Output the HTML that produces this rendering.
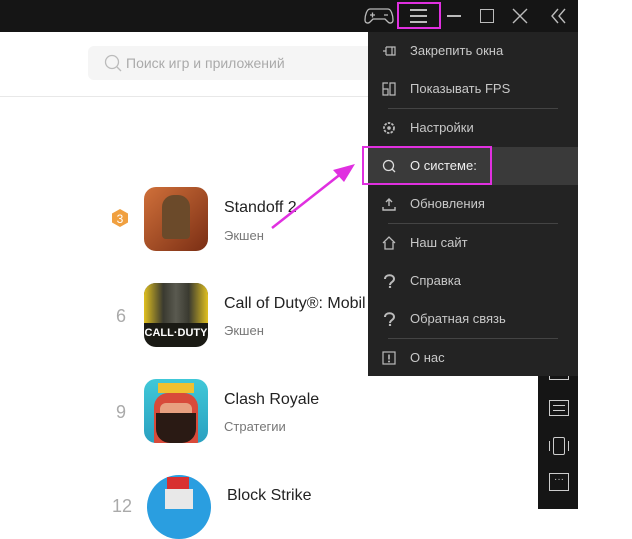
<!DOCTYPE html><html><head><meta charset="utf-8"><style>
*{margin:0;padding:0;box-sizing:border-box}
body{width:632px;height:509px;overflow:hidden;background:#fff;font-family:"Liberation Sans",sans-serif;position:relative}
.a{position:absolute}
.top{left:0;top:0;width:578px;height:32px;background:#151515}
.side{left:538px;top:32px;width:40px;height:477px;background:#151515}
.menu{left:368px;top:32px;width:210px;height:344px;background:#232323}
.mi{position:absolute;left:0;width:210px;height:38px;color:#c8c8c8;font-size:13px;line-height:38px;padding-left:42px}
.mi svg{position:absolute;left:14px;top:12px}
.sep{position:absolute;left:20px;width:170px;height:1px;background:#444}
.t{font-size:16px;color:#222}.s{font-size:13px;color:#777}
.icon{width:64px;height:64px;border-radius:12px;position:absolute;left:144px}
.rk{position:absolute;left:112px;font-size:18px;color:#aaa;width:18px;text-align:center}
</style></head><body>
<div class="a top"></div>
<svg class="a" style="left:364px;top:6px" width="30" height="20" viewBox="0 0 30 20"><path d="M6 3h18c3 0 5 6 5 11c0 3-3 4-5 2l-3-3H9l-3 3c-2 2-5 1-5-2C1 9 3 3 6 3z" fill="none" stroke="#bbb" stroke-width="1.3"/><path d="M6 9h5M8.5 6.5v5M20 9h4" stroke="#bbb" stroke-width="1.3"/></svg>
<div class="a" style="left:410px;top:9px;width:17px;height:1.5px;background:#bbb"></div>
<div class="a" style="left:410px;top:15px;width:17px;height:1.5px;background:#bbb"></div>
<div class="a" style="left:410px;top:21px;width:17px;height:1.5px;background:#bbb"></div>
<div class="a" style="left:447px;top:15px;width:14px;height:1.5px;background:#bbb"></div>
<div class="a" style="left:480px;top:9px;width:14px;height:14px;border:1.5px solid #bbb"></div>
<svg class="a" style="left:512px;top:8px" width="16" height="16"><path d="M1 1L15 15M15 1L1 15" stroke="#bbb" stroke-width="1.4"/></svg>
<svg class="a" style="left:550px;top:8px" width="18" height="16"><path d="M8 1L2 8l6 7M15 1L9 8l6 7" fill="none" stroke="#bbb" stroke-width="1.4"/></svg>
<div class="a" style="left:88px;top:46px;width:290px;height:34px;background:#f5f5f5;border-radius:6px"></div>
<svg class="a" style="left:104px;top:54px" width="18" height="18"><circle cx="8" cy="8" r="6.5" fill="none" stroke="#bbb" stroke-width="1.3"/><path d="M13 13l4 4" stroke="#bbb" stroke-width="1.3"/></svg>
<div class="a" style="left:126px;top:55px;font-size:14px;color:#aaa">Поиск игр и приложений</div>
<div class="a" style="left:0;top:96px;width:368px;height:1px;background:#e8e8e8"></div>

<svg class="a" style="left:111px;top:208px" width="18" height="20"><path d="M9 1l8 4.5v9L9 19l-8-4.5v-9z" fill="#f0a040"/><text x="9" y="15" font-size="12" fill="#fff" text-anchor="middle" font-family="Liberation Sans">3</text></svg>
<div class="icon" style="top:187px;background:linear-gradient(135deg,#d0703a,#7a2e14)"><div style="position:absolute;left:18px;top:8px;width:28px;height:44px;background:#6b4a2a;border-radius:12px 12px 4px 4px"></div></div>
<div class="a t" style="left:224px;top:199px">Standoff 2</div><div class="a s" style="left:224px;top:228px">Экшен</div>
<div class="rk" style="top:306px">6</div>
<div class="icon" style="top:283px;background:#1a1a14;overflow:hidden"><div style="position:absolute;left:0;top:0;width:64px;height:40px;background:linear-gradient(90deg,#e0c020,#3a3a30 30%,#5a5a50 50%,#3a3a30 70%,#e0c020)"></div><div style="position:absolute;left:0;top:44px;width:64px;text-align:center;color:#fff;font-weight:bold;font-size:11px">CALL·DUTY</div></div>
<div class="a t" style="left:224px;top:295px">Call of Duty®: Mobil</div><div class="a s" style="left:224px;top:323px">Экшен</div>
<div class="rk" style="top:402px">9</div>
<div class="icon" style="top:379px;background:linear-gradient(#40c8d8,#2aa0c0);overflow:hidden"><div style="position:absolute;left:14px;top:4px;width:36px;height:10px;background:#f0c030"></div><div style="position:absolute;left:10px;top:14px;width:44px;height:50px;background:#d84a3a;border-radius:14px 14px 0 0"></div><div style="position:absolute;left:16px;top:24px;width:32px;height:30px;background:#e8a080;border-radius:6px"></div><div style="position:absolute;left:12px;top:34px;width:40px;height:30px;background:#2a1a14;border-radius:0 0 14px 14px"></div></div>
<div class="a t" style="left:224px;top:391px">Clash Royale</div><div class="a s" style="left:224px;top:419px">Стратегии</div>
<div class="rk" style="top:496px;left:110px;width:24px">12</div>
<div class="icon" style="top:475px;left:147px;border-radius:32px;background:#2a9ee0;overflow:hidden"><div style="position:absolute;left:20px;top:2px;width:22px;height:14px;background:#d83030"></div><div style="position:absolute;left:18px;top:14px;width:28px;height:20px;background:#e8e8e8"></div></div>
<div class="a t" style="left:227px;top:487px">Block Strike</div>

<div class="a side"></div>
<div class="a" style="left:549px;top:400px;width:20px;height:16px;border:1.3px solid #ccc"></div>
<div class="a" style="left:553px;top:405px;width:12px;height:1.4px;background:#ccc"></div><div class="a" style="left:553px;top:410px;width:12px;height:1.4px;background:#ccc"></div>
<div class="a" style="left:553px;top:437px;width:12px;height:18px;border:1.5px solid #ccc;border-radius:2px"></div>
<div class="a" style="left:549px;top:441px;width:1.4px;height:10px;background:#ccc"></div><div class="a" style="left:568px;top:441px;width:1.4px;height:10px;background:#ccc"></div>
<div class="a" style="left:549px;top:473px;width:20px;height:18px;border:1.3px solid #ccc;color:#ccc;font-size:10px;text-align:center;line-height:12px">···</div>
<div class="a" style="left:549px;top:370px;width:20px;height:10px;border:1.3px solid #ccc;border-top:none"></div>

<div class="a menu">
<div class="mi" style="top:0"><svg width="14" height="14"><path d="M1 7h3M4 3v8M4 3h9v8H4M10 3v8" fill="none" stroke="#bbb" stroke-width="1.2"/></svg>Закрепить окна</div>
<div class="mi" style="top:38px"><svg width="14" height="14"><path d="M6 1H1v12h5V7H1M8 1h5v12H8z" fill="none" stroke="#bbb" stroke-width="1.2"/></svg>Показывать FPS</div>
<div class="sep" style="top:76px"></div>
<div class="mi" style="top:77px"><svg width="14" height="14"><circle cx="7" cy="7" r="5" fill="none" stroke="#bbb" stroke-width="1.8" stroke-dasharray="2.5 1.2"/><circle cx="7" cy="7" r="1.8" fill="#bbb"/></svg>Настройки</div>
<div class="mi" style="top:115px;background:#3a3a3a;color:#eee"><svg width="14" height="14"><circle cx="6.5" cy="6.5" r="5" fill="none" stroke="#ddd" stroke-width="1.3"/><path d="M10 10l3 3" stroke="#ddd" stroke-width="1.3"/></svg>О системе:</div>
<div class="mi" style="top:153px"><svg width="14" height="14"><path d="M7 2v7M4 5l3-3 3 3M1 10v3h12v-3" fill="none" stroke="#bbb" stroke-width="1.4"/></svg>Обновления</div>
<div class="sep" style="top:191px"></div>
<div class="mi" style="top:192px"><svg width="14" height="14"><path d="M1 7L7 1l6 6M3 6v7h8V6" fill="none" stroke="#bbb" stroke-width="1.3"/></svg>Наш сайт</div>
<div class="mi" style="top:230px"><svg width="14" height="14"><path d="M3 5c0-5 9-5 9 0c0 3-4 3-4 6" fill="none" stroke="#bbb" stroke-width="2"/><circle cx="8" cy="13" r="1.2" fill="#bbb"/></svg>Справка</div>
<div class="mi" style="top:268px"><svg width="14" height="14"><path d="M3 5c0-5 9-5 9 0c0 3-4 3-4 6" fill="none" stroke="#bbb" stroke-width="2"/><circle cx="8" cy="13" r="1.2" fill="#bbb"/></svg>Обратная связь</div>
<div class="sep" style="top:306px"></div>
<div class="mi" style="top:307px"><svg width="14" height="14"><rect x="1" y="1" width="12" height="12" fill="none" stroke="#bbb" stroke-width="1.2"/><path d="M7 3.5v5" stroke="#bbb" stroke-width="1.6"/><circle cx="7" cy="10.5" r="1" fill="#bbb"/></svg>О нас</div>
</div>

<div class="a" style="left:397px;top:2px;width:44px;height:27px;border:2.5px solid #e030e0"></div>
<div class="a" style="left:362px;top:146px;width:130px;height:39px;border:2.5px solid #e030e0"></div>
<svg class="a" style="left:0;top:0" width="632" height="509"><path d="M272 228L342 173" stroke="#e030e0" stroke-width="2.5"/><path d="M355 164L333 170L344 182z" fill="#e030e0"/></svg>
</body></html>
